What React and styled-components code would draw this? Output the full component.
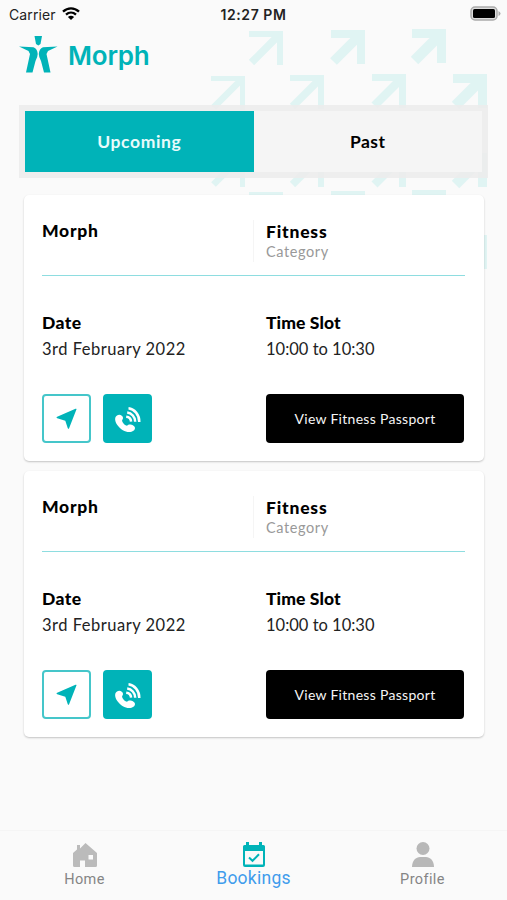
import styled, { createGlobalStyle } from 'styled-components';

const TEAL = '#00b3b8';

const GlobalStyle = createGlobalStyle`
  * {
    box-sizing: border-box;
  }

  body {
    margin: 0;
    background: #fafafa;
    font-family: Lato, 'Open Sans', sans-serif;
    color: #000;
  }

  button {
    font: inherit;
    padding: 0;
    border: none;
    cursor: pointer;
  }
`;

const Screen = styled.div`
  position: relative;
  display: flex;
  flex-direction: column;
  width: 507px;
  height: 900px;
  overflow: hidden;
  background: #fafafa;
`;

const Pattern = styled.svg`
  position: absolute;
  left: 200px;
  top: 20px;
`;

const StatusBar = styled.div`
  position: relative;
  display: grid;
  grid-template-columns: 1fr auto 1fr;
  align-items: center;
  height: 28px;
  padding: 0 6px 0 9px;
  font-family: Inter, sans-serif;
  font-size: 14px;
  color: #222;
`;

const Carrier = styled.div`
  display: flex;
  align-items: center;
  gap: 6px;
  letter-spacing: 0.1px;
`;

const Clock = styled.div`
  font-weight: 600;
  font-size: 14px;
  letter-spacing: 0.55px;
  margin-right: 3px;
`;

const Battery = styled.svg`
  justify-self: end;
  margin-top: -2px;
`;

const Brand = styled.header`
  position: relative;
  display: flex;
  align-items: center;
  height: 54px;
  padding-left: 19px;
  gap: 10px;
`;

const BrandName = styled.span`
  font-family: Inter, sans-serif;
  font-weight: 600;
  font-size: 26px;
  line-height: 30px;
  letter-spacing: -0.2px;
  margin-top: 2px;
  color: ${TEAL};
`;

const Tabs = styled.div`
  position: relative;
  display: flex;
  width: 469px;
  height: 73px;
  margin: 23px 0 0 19px;
  padding: 6px;
  background: rgba(236, 236, 236, 0.9);
`;

const Tab = styled.button`
  flex: 1;
  height: 61px;
  font-weight: 700;
  font-size: 17.5px;
  letter-spacing: ${({ $active }) => ($active ? 0.6 : 0.5)}px;
  color: ${({ $active }) => ($active ? '#e8fbfb' : '#000')};
  background: ${({ $active }) => ($active ? TEAL : '#f5f5f5')};
`;

const List = styled.main`
  position: relative;
  display: flex;
  flex-direction: column;
  flex: 1;
  gap: 10px;
  padding: 17px 23px 0 24px;
`;

const Card = styled.article`
  height: 266px;
  padding: 0 20px 0 18px;
  background: #fff;
  border-radius: 5px;
  box-shadow: 0 1px 2px rgba(0, 0, 0, 0.22);
`;

const CardHead = styled.div`
  display: grid;
  grid-template-columns: 211px 1fr;
  height: 81px;
  margin-right: -1px;
  padding-top: 25px;
  border-bottom: 1px solid #8edde0;
`;

const Category = styled.div`
  height: 42px;
  padding: 1px 0 0 12px;
  border-left: 1px solid #f5f5f5;
`;

const Heading = styled.h2`
  margin: 0;
  font-weight: 900;
  font-size: 17.5px;
  line-height: 22px;
  letter-spacing: ${({ $spacing }) => $spacing || 0}px;
`;

const Caption = styled.div`
  font-size: 14.5px;
  line-height: 18px;
  letter-spacing: 0.6px;
  color: #999;
`;

const Details = styled.div`
  display: grid;
  grid-template-columns: 224px 1fr;
  padding-top: 36px;
`;

const Value = styled.div`
  margin-top: 4px;
  font-size: 16.5px;
  line-height: 22px;
  letter-spacing: ${({ $spacing }) => $spacing || 0}px;
  color: #222;
`;

const Actions = styled.div`
  display: flex;
  gap: 12px;
  margin-top: 34px;
`;

const IconButton = styled.button`
  display: flex;
  align-items: center;
  justify-content: center;
  width: 49px;
  height: 49px;
  color: ${({ $filled }) => ($filled ? '#fff' : TEAL)};
  background: ${({ $filled }) => ($filled ? TEAL : '#fff')};
  border: 2px solid ${({ $filled }) => ($filled ? TEAL : '#45c6ca')};
  border-radius: 4px;
`;

const PassportButton = styled.button`
  width: 198px;
  height: 49px;
  margin-left: auto;
  color: #f5f5f5;
  background: #000;
  border-radius: 4px;
  font-size: 14px;
  letter-spacing: 0.3px;
`;

const TabBar = styled.nav`
  position: relative;
  display: grid;
  grid-template-columns: repeat(3, 1fr);
  height: 70px;
  border-top: 1px solid #f5f5f5;
`;

const NavItem = styled.a`
  display: flex;
  flex-direction: column;
  align-items: center;
  gap: 1px;
  padding-top: 11px;
  font-family: Roboto, sans-serif;
  font-size: ${({ $active }) => ($active ? 17.5 : 14.5)}px;
  line-height: ${({ $active }) => ($active ? 19 : 22)}px;
  letter-spacing: ${({ $active }) => ($active ? 0.25 : 0.4)}px;
  color: ${({ $active }) => ($active ? '#3f9cec' : '#858585')};
`;

// w is the head's bar thickness, the shaft is a bit heavier
const ARROWS = [
  { x: 49, y: 11, w: 6 },
  { x: 131, y: 10, w: 8 },
  { x: 212, y: 9, w: 9 },
  { x: 11, y: 56, w: 5 },
  { x: 90, y: 55, w: 6 },
  { x: 172, y: 54, w: 7 },
  { x: 253, y: 54, w: 9 },
  { x: 11, y: 133, w: 5 },
  { x: 90, y: 133, w: 6 },
  { x: 172, y: 133, w: 7 },
  { x: 253, y: 133, w: 9 },
  { x: 49, y: 172, w: 5 },
  { x: 131, y: 171, w: 6 },
  { x: 212, y: 170, w: 8 },
  { x: 253, y: 215, w: 8 },
];

const ArrowPattern = () => (
  <Pattern width="288" height="260" fill="none" stroke="#e0f4f3">
    {ARROWS.map(({ x, y, w }) => (
      <g key={`${x}-${y}`}>
        <path strokeWidth={w} d={`M${x} ${y + w / 2}H${x + 34 - w / 2}V${y + 34}`} />
        <path strokeWidth={w + 1.5} d={`M${x + 2.5} ${y + 31.5}L${x + 33 - w / 2} ${y + 1 + w / 2}`} />
      </g>
    ))}
  </Pattern>
);

const WifiIcon = () => (
  <svg width="18" height="14" viewBox="0 0 18 14" fill="none" stroke="#000" strokeWidth="2.3">
    <path d="M1 4.7C5.7.2 12.3.2 17 4.700M4 7.700c3-2.800 7-2.800 10 0" />
    <path d="M9 13 5.900 9.900c1.800-1.700 4.400-1.700 6.200 0z" fill="#000" stroke="none" />
  </svg>
);

const BatteryIcon = () => (
  <Battery width="31" height="15" viewBox="0 0 31 15">
    <rect x="1" y="1" width="26" height="13" rx="4" fill="#ddd" stroke="#aaa" strokeWidth="1.5" />
    <rect x="3" y="3" width="22" height="9" rx="1.5" fill="#000" />
    <path d="M28.500 5v5q2-1 2-2.500T28.500 5" fill="#aaa" />
  </Battery>
);

const MorphLogo = () => (
  <svg width="39" height="38" viewBox="0 0 39 38" fill={TEAL}>
    <path d="M15.500 0h7.500l-1.500 8-2.200 1.500L17 8z" />
    <path d="M0 10.500 14.500 11.200Q18.500 13 18.700 18q0 3-2.200 7L13.500 36.500H7L11 18 9.500 15z" />
    <path d="M38.500 10.500 24 11.200Q20 13 19.800 18q0 3 2.200 7L25 36.500h6.500L27.500 18 29 15z" />
  </svg>
);

const NavigateIcon = () => (
  <svg width="22" height="22" viewBox="0 0 22 22" fill="currentColor">
    <path d="M20.500 1.200 13.200 20q-.7 1.700-1.500 0L9.300 12.700 1.200 10.200q-1.400-.7 0-1.400L19.500.8q1.200-.4 1 .4z" />
  </svg>
);

const PhoneIcon = () => (
  <svg width="28" height="28" viewBox="0 0 28 28" fill="none" stroke="currentColor">
    <path
      d="M3 10.500C.5 12 .5 15.800 3.300 20c3.900 5.500 9.700 8 14.200 6.700 2.200-.6 3.700-2.100 3.500-3.900-.2-2-3.700-3.800-5.900-3.300-1.500.4-1.700 1.500-3 1-2-.9-3.500-2.700-4-4.500-.3-1.300 1.100-1.600.9-3.200-.3-2.200-3.300-4-6-2.300z"
      fill="currentColor"
      stroke="none"
    />
    <path
      d="M14.500 3.300c5.700.5 11 6.500 10.800 13.700M13.200 7.500c4.300.4 8 4.500 8 9.200M12.200 11.700c2.700.2 4.700 2.300 4.900 4.900"
      strokeWidth="2.500"
    />
  </svg>
);

const HomeIcon = () => (
  <svg width="26" height="26" viewBox="0 0 26 26" fill="#bbb">
    <path
      fillRule="evenodd"
      d="M5 3h3v3.500L13.500 1 25 11v12.500q0 1.500-1.500 1.500H13v-6.500H8V25H2.500Q1 25 1 23.500V11l4-3.500zM16.500 13v4.500H21V13z"
    />
  </svg>
);

const CalendarIcon = () => (
  <svg width="26" height="26" viewBox="0 0 26 26" fill={TEAL}>
    <path
      fillRule="evenodd"
      d="M5 0h3v3h10V0h3v3h1.500Q24 3 24 4.500v18.500q0 2-2 2H4q-2 0-2-2v-18.500Q2 3 3.500 3H5zM4 9v13.500h18V9z"
    />
    <path d="m8 15.500 3.500 3.300 6.500-6.500" fill="none" stroke={TEAL} strokeWidth="2" />
  </svg>
);

const ProfileIcon = () => (
  <svg width="26" height="26" viewBox="0 0 26 26" fill="#b8b8b8">
    <circle cx="13" cy="6.500" r="6.500" />
    <path d="M2 25C2 18.500 6 15 10 15h6c4 0 8 3.500 8 10z" />
  </svg>
);

const BookingCard = ({ name, category, date, slot }) => (
  <Card>
    <CardHead>
      <Heading $spacing={0.7}>{name}</Heading>
      <Category>
        <Heading $spacing={0.8}>{category}</Heading>
        <Caption>Category</Caption>
      </Category>
    </CardHead>
    <Details>
      <div>
        <Heading $spacing={0.4}>Date</Heading>
        <Value $spacing={0.5}>{date}</Value>
      </div>
      <div>
        <Heading $spacing={0.1}>Time Slot</Heading>
        <Value>{slot}</Value>
      </div>
    </Details>
    <Actions>
      <IconButton aria-label="Directions">
        <NavigateIcon />
      </IconButton>
      <IconButton $filled aria-label="Call">
        <PhoneIcon />
      </IconButton>
      <PassportButton>View Fitness Passport</PassportButton>
    </Actions>
  </Card>
);

const BOOKINGS = [
  { id: 1, name: 'Morph', category: 'Fitness', date: '3rd February 2022', slot: '10:00 to 10:30' },
  { id: 2, name: 'Morph', category: 'Fitness', date: '3rd February 2022', slot: '10:00 to 10:30' },
];

const App = () => (
  <>
    <GlobalStyle />
    <Screen>
      <ArrowPattern />
      <StatusBar>
        <Carrier>
          Carrier
          <WifiIcon />
        </Carrier>
        <Clock>12:27 PM</Clock>
        <BatteryIcon />
      </StatusBar>
      <Brand>
        <MorphLogo />
        <BrandName>Morph</BrandName>
      </Brand>
      <Tabs>
        <Tab $active>Upcoming</Tab>
        <Tab>Past</Tab>
      </Tabs>
      <List>
        {BOOKINGS.map(({ id, ...booking }) => (
          <BookingCard key={id} {...booking} />
        ))}
      </List>
      <TabBar>
        <NavItem>
          <HomeIcon />
          Home
        </NavItem>
        <NavItem $active>
          <CalendarIcon />
          Bookings
        </NavItem>
        <NavItem>
          <ProfileIcon />
          Profile
        </NavItem>
      </TabBar>
    </Screen>
  </>
);

export default App;
